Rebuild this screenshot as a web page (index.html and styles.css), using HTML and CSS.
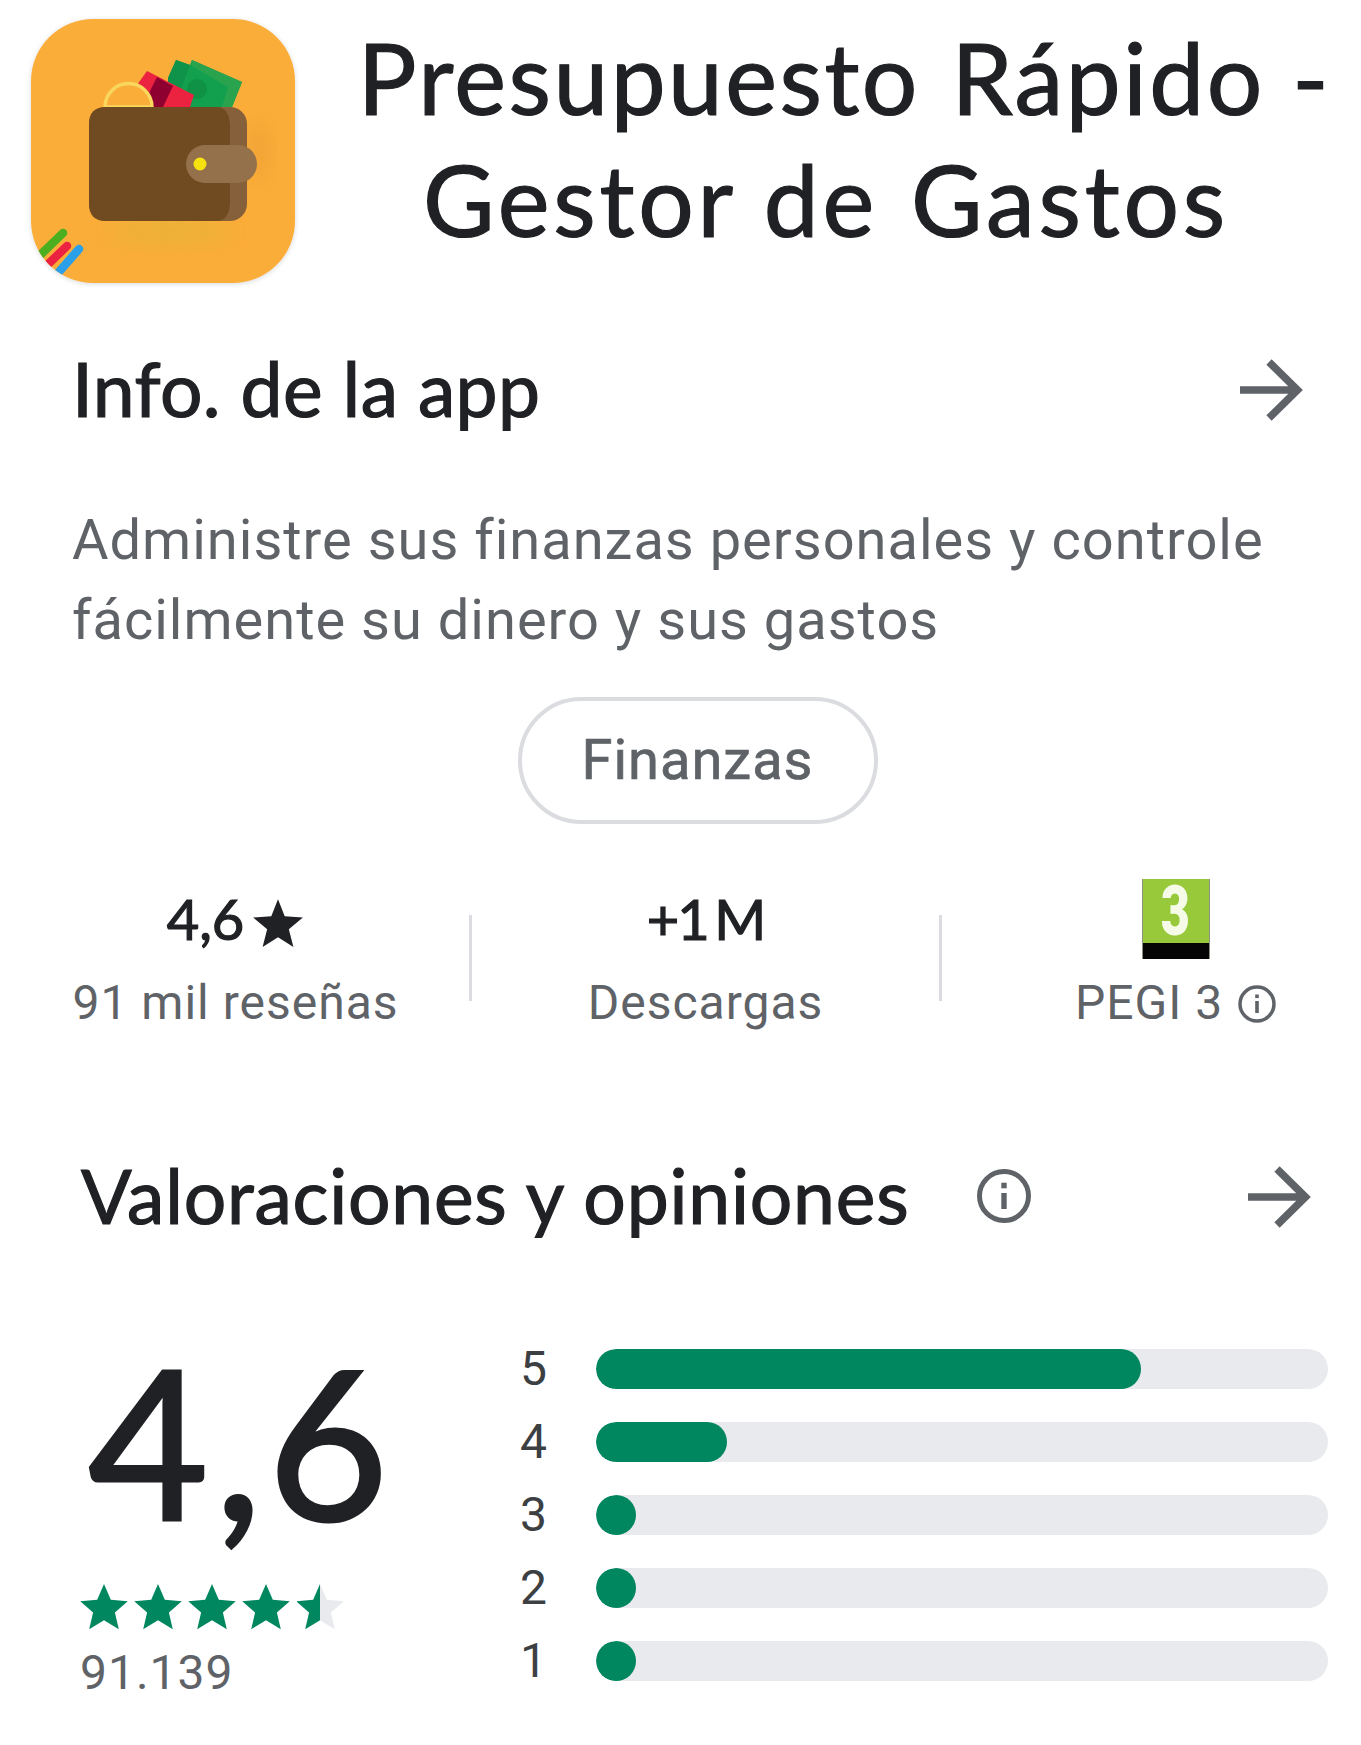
FILE: index.html
```html
<!DOCTYPE html>
<html lang="es">
<head>
<meta charset="utf-8">
<title>Presupuesto Rápido</title>
<link rel="stylesheet" href="styles.css">
</head>
<body>
<div class="page">
  <header class="hero">
    <svg class="app-icon" viewBox="0 0 264 264" aria-hidden="true">
      <defs>
        <filter id="soft" x="-30%" y="-30%" width="160%" height="160%"><feGaussianBlur stdDeviation="10"/></filter>
      </defs>
      <rect width="264" height="264" fill="#fbad3a"/>
      <ellipse cx="140" cy="212" rx="62" ry="14" fill="#e9b338" opacity=".8" filter="url(#soft)"/>
      <ellipse cx="226" cy="132" rx="12" ry="30" fill="#ea9f33" opacity=".6" filter="url(#soft)"/>
      <polygon points="137,59 145,41 159,46 161,41 211,63 201,88 137,88" fill="#12a04f"/>
      <polygon points="137,59 145,41 159,46 150,70 146,88 137,88" fill="#0f934a"/>
      <polygon points="159,46 161,41 211,63 201,88 191,88 197,68" fill="#2aa34f"/>
      <circle cx="166" cy="70" r="10" fill="#0e8c43" opacity=".7"/>
      <polygon points="106,66 116,52 163,76 159,88 122,88" fill="#ec2340"/>
      <polygon points="126,58 142,67 132,88 122,88 117,76" fill="#8e0030"/>
      <path d="M74 88a23.500 23.500 0 0 1 47 0z" fill="#fbad3a" stroke="#f8d75c" stroke-width="3.500"/>
      <rect x="58" y="88" width="158" height="114" rx="17" fill="#86603a"/>
      <path d="M75 88h110q14 0 14 20v74q0 20-14 20H75q-17 0-17-17v-80q0-17 17-17z" fill="#704a20"/>
      <rect x="155" y="126" width="71" height="38" rx="19" fill="#94714a"/>
      <circle cx="169" cy="145" r="6.500" fill="#f5e20f"/>
      <path d="M2 243 L32 214" stroke="#4caf20" stroke-width="8.500" stroke-linecap="round"/>
      <path d="M9 253 L36 227" stroke="#ec2340" stroke-width="8.500" stroke-linecap="round"/>
      <path d="M20 262 L48 230" stroke="#2b9fe8" stroke-width="8.500" stroke-linecap="round"/>
    </svg>
    <h1 class="title"><span class="title-first">Presupuesto<span class="wide-gap"> </span>Rápido -</span><span class="title-second">Gestor de<span class="wide-gap"> </span>Gastos</span></h1>
  </header>

  <section class="info">
    <div class="section-head">
      <h2 class="section-title">Info. de la app</h2>
      <svg class="arrow" viewBox="0 0 64 64" aria-hidden="true"><path d="M0 32h58M29 4l28.500 28L29 60" fill="none" stroke="#5f6368" stroke-width="7.500"/></svg>
    </div>
    <p class="description">Administre sus finanzas personales y controle fácilmente su dinero y sus gastos</p>
    <div class="chip-row"><span class="chip">Finanzas</span></div>
  </section>

  <div class="stats">
    <div class="stat">
      <div class="stat-value">4,6<svg class="mini-star" viewBox="0 0 24 24" aria-hidden="true"><path d="M12 1.500l3.100 7.900 8.400.5-6.500 5.400 2.100 8.200L12 19l-7.100 4.500L7 15.300.5 9.900l8.400-.5z" fill="#202124"/></svg></div>
      <div class="stat-label">91 mil reseñas</div>
    </div>
    <div class="divider"></div>
    <div class="stat">
      <div class="stat-value tight">+1 M</div>
      <div class="stat-label">Descargas</div>
    </div>
    <div class="divider"></div>
    <div class="stat">
      <div class="pegi"><div class="pegi-top"><span class="pegi-num">3</span></div></div>
      <div class="stat-label">PEGI 3 <svg class="small-info" viewBox="0 0 38 38" aria-hidden="true"><circle cx="19" cy="19" r="17" fill="none" stroke="#5f6368" stroke-width="3.500"/><rect x="17.200" y="16" width="3.600" height="12" fill="#5f6368"/><rect x="17.200" y="9.500" width="3.600" height="3.600" fill="#5f6368"/></svg></div>
    </div>
  </div>

  <section class="ratings">
    <div class="section-head ratings-head">
      <h2 class="section-title">Valoraciones y opiniones</h2>
      <svg class="big-info" viewBox="0 0 54 54" aria-hidden="true"><circle cx="27" cy="27" r="24.500" fill="none" stroke="#5f6368" stroke-width="5"/><rect x="24.300" y="24" width="5.400" height="16" fill="#5f6368"/><rect x="24.300" y="13.700" width="5.400" height="5.600" fill="#5f6368"/></svg>
      <svg class="arrow" viewBox="0 0 64 64" aria-hidden="true"><path d="M0 32h58M29 4l28.500 28L29 60" fill="none" stroke="#5f6368" stroke-width="7.500"/></svg>
    </div>
    <div class="ratings-body">
      <div class="score">
        <div class="score-num">4,6</div>
        <svg class="stars" viewBox="0 0 264 46" aria-hidden="true">
          <defs>
            <path id="s" d="M23 0l6.800 15.800 17 1.500-12.900 11.200 3.900 16.700L23 36.300 8.200 45.200l3.900-16.700L-.8 17.300l17-1.500z"/>
            <clipPath id="half"><rect x="0" y="0" width="23" height="46"/></clipPath>
          </defs>
          <use href="#s" x="1" fill="#01875f"/>
          <use href="#s" x="55" fill="#01875f"/>
          <use href="#s" x="109" fill="#01875f"/>
          <use href="#s" x="163" fill="#01875f"/>
          <g transform="translate(217 0)">
            <use href="#s" fill="#e8eaed"/>
            <use href="#s" fill="#01875f" clip-path="url(#half)"/>
          </g>
        </svg>
        <div class="score-count">91.139</div>
      </div>
      <div class="bars">
        <div class="bar-row"><span class="bar-label">5</span><div class="track"><div class="fill" style="width:545px"></div></div></div>
        <div class="bar-row"><span class="bar-label">4</span><div class="track"><div class="fill" style="width:131px"></div></div></div>
        <div class="bar-row"><span class="bar-label">3</span><div class="track"><div class="fill" style="width:40px"></div></div></div>
        <div class="bar-row"><span class="bar-label">2</span><div class="track"><div class="fill" style="width:40px"></div></div></div>
        <div class="bar-row"><span class="bar-label">1</span><div class="track"><div class="fill" style="width:40px"></div></div></div>
      </div>
    </div>
  </section>
</div>
</body>
</html>
```

FILE: styles.css
```css
* { box-sizing: border-box; }
html, body { margin: 0; padding: 0; background: #fff; }
body { font-family: Roboto, "Liberation Sans", sans-serif; color: #202124; overflow: hidden; }
.page { width: 1361px; height: 1745px; overflow: hidden; }

.hero { display: flex; align-items: flex-start; padding: 19px 0 0 31px; }
.app-icon { width: 264px; height: 264px; border-radius: 62px; flex: none; box-shadow: 0 1px 5px rgba(60,64,67,.2); }
.title { margin: -3px 0 0; width: 1058px; text-align: center; font-family: Lato, sans-serif; font-weight: 400; font-size: 98px; line-height: 122px; white-space: nowrap; color: #202124; -webkit-text-stroke: 1.2px #202124; }
.title-first, .title-second { display: block; }
.title-first { padding-left: 41px; letter-spacing: 2.5px; }
.title-second { padding-left: 4px; letter-spacing: 3.8px; }
.wide-gap { margin-left: 4px; }

.info { padding: 0 0 0 72px; margin-top: 67px; }
.section-head { display: flex; align-items: center; height: 76px; padding-right: 57px; justify-content: space-between; }
.section-title { margin: 0; font-family: Lato, sans-serif; font-weight: 400; font-size: 75px; letter-spacing: .4px; line-height: 76px; color: #202124; -webkit-text-stroke: 1.2px #202124; }
.arrow { width: 64px; height: 64px; flex: none; margin-top: 4px; }
.description { margin: 74px 0 0; width: 1240px; font-size: 56px; line-height: 80px; color: #5f6368; letter-spacing: 1px; }
.chip-row { display: flex; justify-content: center; margin-top: 37px; padding-right: 38px; }
.chip { display: block; width: 360px; height: 127px; border: 4px solid #dadce0; border-radius: 64px; text-align: center; font-size: 56px; font-weight: 400; letter-spacing: 1px; line-height: 119px; color: #5f6368; -webkit-text-stroke: .7px #5f6368; }

.stats { display: flex; align-items: flex-end; margin-top: 55px; padding-left: 2px; height: 163px; width: 1420px; }
.stat { width: 467px; flex: none; text-align: center; }
.divider { width: 3px; height: 86px; flex: none; background: #dadce0; margin-bottom: 41px; }
.stat-value { height: 80px; font-family: Lato, sans-serif; font-size: 56px; line-height: 80px; -webkit-text-stroke: 1.2px #202124; }
.tight { letter-spacing: -2px; word-spacing: -6px; }
.mini-star { width: 52px; height: 52px; margin-left: 8px; vertical-align: -8px; }
.stat-label { margin-top: 5px; font-size: 48px; line-height: 78px; color: #5f6368; letter-spacing: 1px; white-space: nowrap; }
.pegi { width: 68px; height: 80px; margin: 0 auto; background: #050505; border-left: 1px solid #8a8f80; border-right: 1px solid #8a8f80; }
.pegi-top { display: flex; align-items: center; justify-content: center; height: 64px; background: #97c93a; }
.pegi-num { display: block; font-weight: 900; font-size: 70px; line-height: 56px; color: #f6fbe8; transform: scaleX(.72); }
.small-info { width: 38px; height: 38px; vertical-align: -4px; margin-left: 2px; }

.ratings { margin-top: 115px; padding-left: 81px; }
.ratings-head { padding-right: 49px; justify-content: flex-start; }
.ratings-head .section-title { letter-spacing: .8px; }
.ratings-head .arrow { margin-left: auto; }
.big-info { width: 54px; height: 54px; margin: 2px 0 0 68px; flex: none; }

.ratings-body { display: flex; margin-top: 116px; }
.score { width: 421px; flex: none; margin-top: -22px; }
.score-num { font-family: Lato, sans-serif; font-size: 208px; letter-spacing: 6px; line-height: 226px; -webkit-text-stroke: 3px #202124; margin-left: 7px; }
.stars { display: block; width: 264px; height: 46px; margin: 31px 0 0 -1px; }
.score-count { font-size: 48px; line-height: 64px; margin: 11px 0 0 -1px; color: #5f6368; letter-spacing: 1px; }
.bars { width: 827px; display: flex; flex-direction: column; gap: 33px; }
.bar-row { display: flex; align-items: center; height: 40px; }
.bar-label { width: 94px; padding-left: 18px; font-size: 48px; line-height: 40px; color: #3c4043; flex: none; }
.track { width: 732px; height: 40px; border-radius: 20px; background: #e8eaed; overflow: hidden; }
.fill { height: 40px; border-radius: 20px; background: #01875f; }
```
